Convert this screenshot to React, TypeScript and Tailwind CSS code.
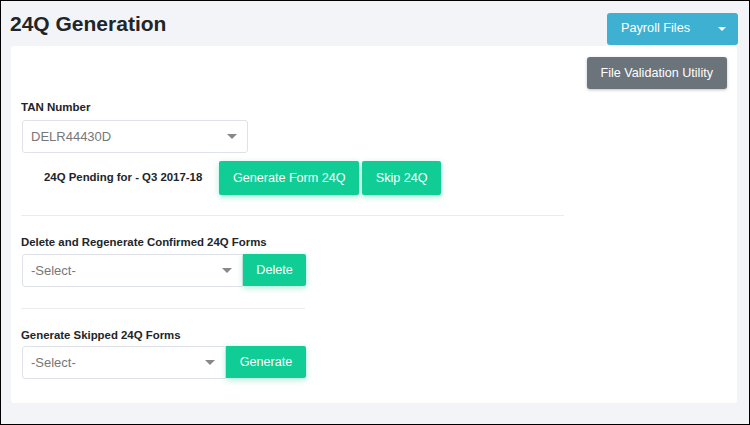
import React from 'react';

const green = 'bg-[#10cd95] text-white text-[12.6px] shadow-[0_2px_6px_rgba(16,205,149,0.35)]';

const Caret = () => (
  <span className="h-0 w-0 border-x-[5px] border-t-[5px] border-x-transparent border-t-[#888]" />
);

const Select = ({ value, className }: { value: string; className: string }) => (
  <div className={`flex h-[33px] items-center justify-between rounded-[3px] border border-[#dfe2e6] bg-white pl-2 pr-[10px] text-[13px] text-[#777] ${className}`}>
    <span>{value}</span>
    <Caret />
  </div>
);

export default function App() {
  return (
    <div className="h-[425px] w-[750px] border border-black bg-[#f3f4f7] font-['Liberation_Sans',Arial,sans-serif] text-[#212529]">
      <div className="flex items-start justify-between pl-[9px] pr-[11px] pt-[12px]">
        <h1 className="text-[21px] font-bold leading-[22px]">24Q Generation</h1>
        <button className="flex h-[32px] w-[131px] items-center justify-between rounded-[3px] bg-[#3eb0d2] pl-[14px] pr-[12px] text-[12.7px] text-white">
          <span>Payroll Files</span>
          <span className="h-0 w-0 border-x-[4px] border-t-[4px] border-x-transparent border-t-white" />
        </button>
      </div>
      <div className="ml-[10px] mr-[12px] mt-[1px] h-[357px] rounded-[3px] bg-white px-[10px] pt-[11px]">
        <div className="flex justify-end">
          <button className="h-[32px] rounded-[3px] bg-[#6b737b] px-[14px] text-[12.6px] text-white shadow-[0_1px_3px_rgba(0,0,0,0.25)]">
            File Validation Utility
          </button>
        </div>
        <div className="mt-[11px] text-[11.5px] font-bold leading-[14px]">TAN Number</div>
        <Select value="DELR44430D" className="ml-[1px] mt-[6px] w-[226px]" />
        <div className="mt-[8px] flex items-center">
          <span className="ml-[23px] text-[11.4px] font-bold">24Q Pending for - Q3 2017-18</span>
          <button className={`ml-[17px] h-[34px] w-[140px] rounded-[2px] ${green}`}>Generate Form 24Q</button>
          <button className={`ml-[3px] h-[34px] w-[79px] rounded-[2px] ${green}`}>Skip 24Q</button>
        </div>
        <div className="mt-[20px] h-px w-[543px] bg-[#eaecef]" />
        <div className="mt-[19px] text-[11.4px] font-bold leading-[14px]">Delete and Regenerate Confirmed 24Q Forms</div>
        <div className="ml-[1px] mt-[5px] flex">
          <Select value="-Select-" className="w-[221px] rounded-r-none" />
          <button className={`h-[32px] w-[63px] rounded-r-[2px] ${green}`}>Delete</button>
        </div>
        <div className="mt-[21px] h-px w-[284px] bg-[#eaecef]" />
        <div className="mt-[19px] text-[11.4px] font-bold leading-[14px]">Generate Skipped 24Q Forms</div>
        <div className="ml-[1px] mt-[4px] flex">
          <Select value="-Select-" className="w-[204px] rounded-r-none" />
          <button className={`h-[32px] w-[80px] rounded-r-[2px] ${green}`}>Generate</button>
        </div>
      </div>
    </div>
  );
}
